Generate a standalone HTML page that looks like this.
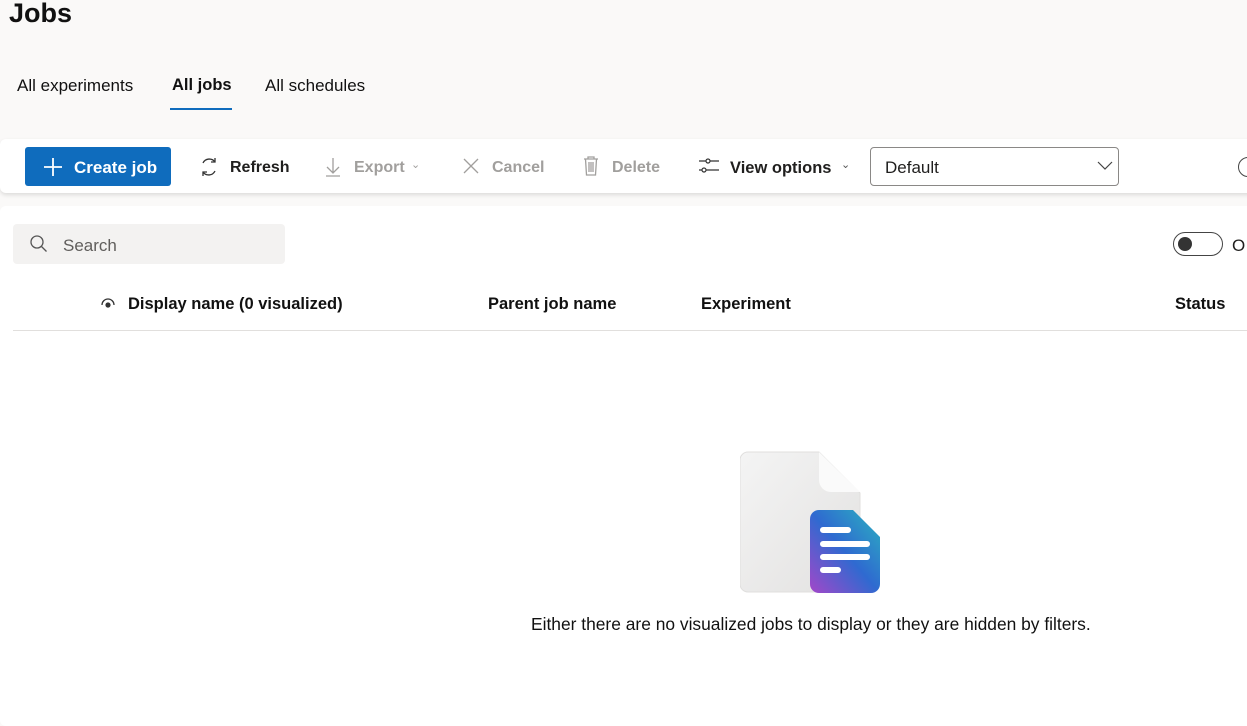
<!DOCTYPE html>
<html><head><meta charset="utf-8"><style>
*{margin:0;padding:0;box-sizing:border-box}
body{width:1247px;height:703px;overflow:hidden;background:#faf9f8;font-family:"Liberation Sans",sans-serif;color:#201f1e;position:relative}
.a{position:absolute;white-space:nowrap}
.tb{font-size:16px;font-weight:bold}
.dis{color:#a19f9d}
</style></head><body>
<div class="a" style="left:9px;top:-2px;font-size:27px;font-weight:bold;color:#111">Jobs</div>
<div class="a" style="left:17px;top:76px;font-size:17px;color:#111">All experiments</div>
<div class="a" style="left:172px;top:76px;font-size:16.5px;font-weight:bold;color:#111">All jobs</div>
<div class="a" style="left:170px;top:108px;width:62px;height:2px;background:#0f6cbd"></div>
<div class="a" style="left:265px;top:76px;font-size:17px;color:#111">All schedules</div>

<div class="a" style="left:0;top:139px;width:1260px;height:54px;background:#fff;border-radius:6px;box-shadow:0 2px 4px rgba(0,0,0,.12)"></div>
<div class="a" style="left:25px;top:147px;width:146px;height:39px;background:#0f6cbd;border-radius:3px"></div>
<svg class="a" style="left:42px;top:156px" width="22" height="22"><path d="M11 2v18M2 11h18" stroke="#fff" stroke-width="1.8"/></svg>
<div class="a tb" style="left:74px;top:158px;color:#fff;font-size:17px">Create job</div>
<svg class="a" style="left:198px;top:156px" width="22" height="22" fill="none" stroke="#333" stroke-width="1.3"><path d="M5 7A7 7 0 0 1 17 6M17 15A7 7 0 0 1 5 16"/><path d="M17 2v4h-4M5 20v-4h4"/></svg>
<div class="a tb" style="left:230px;top:159px">Refresh</div>
<svg class="a dis" style="left:323px;top:156px" width="20" height="22" fill="none" stroke="#a19f9d" stroke-width="1.3"><path d="M10 2v14M4 11l6 6 6-6M3 20h14"/></svg>
<div class="a tb dis" style="left:354px;top:159px">Export</div>
<div class="a dis" style="left:411px;top:158px;font-size:11px">&#8964;</div>
<svg class="a" style="left:462px;top:157px" width="18" height="18" stroke="#a19f9d" stroke-width="1.3"><path d="M2 2l14 14M16 2L2 16"/></svg>
<div class="a tb dis" style="left:492px;top:159px">Cancel</div>
<svg class="a" style="left:582px;top:155px" width="18" height="22" fill="none" stroke="#a19f9d" stroke-width="1.3"><path d="M2 4h14M6 4V2h6v2M3.5 4l1 16h9l1-16M7 7v10M9 7v10M11 7v10"/></svg>
<div class="a tb dis" style="left:612px;top:159px">Delete</div>
<svg class="a" style="left:698px;top:157px" width="22" height="18" fill="none" stroke="#333" stroke-width="1.2"><path d="M1 4h7M12 4h9M1 13h3M8 13h13"/><circle cx="10" cy="4" r="2"/><circle cx="6" cy="13" r="2"/></svg>
<div class="a tb" style="left:730px;top:159px;font-size:16.5px">View options</div>
<div class="a" style="left:841px;top:158px;font-size:11px;color:#555">&#8964;</div>
<div class="a" style="left:870px;top:147px;width:249px;height:39px;border:1px solid #8a8886;border-radius:4px;background:#fff"></div>
<div class="a" style="left:885px;top:158px;font-size:17px">Default</div>
<svg class="a" style="left:1097px;top:161px" width="16" height="10" fill="none" stroke="#444" stroke-width="1.2"><path d="M1 1l7 7 7-7"/></svg>
<div class="a" style="left:1238px;top:157px;width:20px;height:20px;border:1.5px solid #444;border-radius:50%"></div>

<div class="a" style="left:0;top:206px;width:1260px;height:520px;background:#fff;border-radius:6px"></div>
<div class="a" style="left:13px;top:224px;width:272px;height:40px;background:#f3f2f1;border-radius:4px"></div>
<svg class="a" style="left:29px;top:234px" width="20" height="20" fill="none" stroke="#555" stroke-width="1.3"><circle cx="8" cy="8" r="6"/><path d="M12.5 12.5l5 5"/></svg>
<div class="a" style="left:63px;top:236px;font-size:17px;color:#605e5c">Search</div>
<div class="a" style="left:1173px;top:232px;width:50px;height:24px;border:1.3px solid #444;border-radius:12px"></div>
<div class="a" style="left:1178px;top:237px;width:14px;height:14px;background:#333;border-radius:50%"></div>
<div class="a" style="left:1232px;top:236px;font-size:17px">O</div>

<svg class="a" style="left:101px;top:297px" width="14" height="14"><path d="M1 8a6 6 0 0 1 12 0" fill="none" stroke="#333" stroke-width="1.3"/><circle cx="7" cy="8" r="2.6" fill="#333"/></svg>
<div class="a tb" style="left:128px;top:295px;color:#111;font-size:16.5px">Display name (0 visualized)</div>
<div class="a tb" style="left:488px;top:295px;color:#111;font-size:16.5px">Parent job name</div>
<div class="a tb" style="left:701px;top:295px;color:#111;font-size:16.5px">Experiment</div>
<div class="a tb" style="left:1175px;top:295px;color:#111;font-size:16.5px">Status</div>
<div class="a" style="left:13px;top:330px;width:1240px;height:1px;background:#e1dfdd"></div>

<svg class="a" style="left:740px;top:451px" width="142" height="142">
<defs>
<linearGradient id="p" x1="0" y1="0" x2="1" y2="1"><stop offset="0" stop-color="#f4f4f4"/><stop offset="1" stop-color="#e2e1e0"/></linearGradient>
<linearGradient id="b" x1="0" y1="1" x2="1" y2="0"><stop offset="0" stop-color="#a347c9"/><stop offset=".5" stop-color="#2f6ad0"/><stop offset="1" stop-color="#2bb3c0"/></linearGradient>
</defs>
<path d="M8 1h71l41 41v91a8 8 0 0 1-8 8H8a8 8 0 0 1-8-8V9a8 8 0 0 1 8-8z" fill="url(#p)" stroke="#e0dfde"/>
<path d="M79 1v28a12 12 0 0 0 12 12h29z" fill="#fafafa"/>
<path d="M79 59h34l27 27v47a9 9 0 0 1-9 9H79a9 9 0 0 1-9-9V68a9 9 0 0 1 9-9z" fill="url(#b)"/>
<g stroke="#fff" stroke-width="6" stroke-linecap="round"><path d="M83 79h25M83 93h44M83 106h44M83 119h15"/></g>
</svg>
<div class="a" style="left:531px;top:614px;font-size:17.4px;color:#111">Either there are no visualized jobs to display or they are hidden by filters.</div>
</body></html>
